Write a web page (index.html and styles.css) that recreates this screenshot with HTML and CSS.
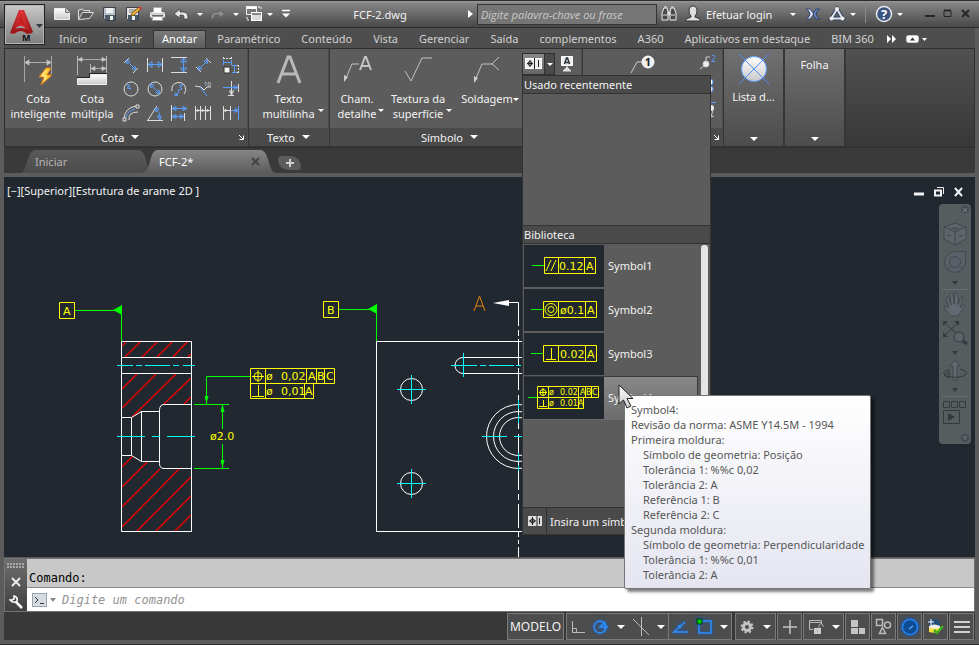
FILE: index.html
```html
<!DOCTYPE html>
<html lang="pt-BR">
<head>
    <meta charset="UTF-8">
    <meta name="viewport" content="width=device-width, initial-scale=1.0">
    <title>FCF-2.dwg</title>
    <link rel="stylesheet" href="styles.css">
</head>
<body>
    <!-- Application menu -->
    <button class="app-button" aria-label="Menu do aplicativo">
        <svg width="38" height="38" viewBox="0 0 38 38">
            <defs>
                <linearGradient id="red" x1="0" x2="1"><stop offset="0" stop-color="#8f1114"/><stop offset=".5" stop-color="#e5373a"/><stop offset="1" stop-color="#8f1114"/></linearGradient>
                <linearGradient id="paper" x2="0" y2="1"><stop offset="0" stop-color="#fff"/><stop offset="1" stop-color="#c8c8cc"/></linearGradient>
            </defs>
            <path d="M4 27 13 4h5l9 22-6 1-3-6q-4-2-7 0l-3 5z" fill="url(#red)"/>
            <path d="m15 7-4 13q4-2 8 0z" fill="#c62023"/>
            <path d="M4 27q9-10 23 0l-6 1q-6-6-13 0z" fill="#a0181b"/>
            <path d="M30 18h7l-3.500 4z" fill="#333b44"/>
            <text class="app-letter" x="16" y="35">M</text>
        </svg>
    </button>

    <header class="titlebar">
        <div class="quick-tools">
            <button class="qt" aria-label="Novo"><svg width="18" height="16" viewBox="0 0 18 16"><path d="M1.500 2.500h11l4 4v7h-15z" fill="url(#paper)" stroke="#eee"/><path d="M12.500 2.500v4h4" fill="#bbb" stroke="#777"/></svg></button>
            <button class="qt" aria-label="Abrir"><svg width="18" height="16" viewBox="0 0 18 16"><path d="M1.500 13V4l4-1 1 1.500h6V7" fill="#666" stroke="#ddd"/><path d="m1.500 13.500 4-7h11l-4 6z" fill="#55585c" stroke="#ddd"/></svg></button>
            <button class="qt" aria-label="Salvar"><svg width="16" height="16" viewBox="0 0 16 16"><path d="M1.500 1.500h12v13h-10l-2-2z" fill="#b9c2ca" stroke="#39424c"/><path d="M4 2h7v5H4z" fill="#f2f2f2"/><path d="M3 9h10v5H3z" fill="#4b5865"/><path d="M8 10h3v4H8z" fill="#eee"/></svg></button>
            <button class="qt" aria-label="Salvar como"><svg width="18" height="16" viewBox="0 0 18 16"><path d="M1.500 1.500h12v13h-10l-2-2z" fill="#e3e3e3" stroke="#39424c"/><path d="M4 4h7M4 6h5" stroke="#777"/><path d="M3 9h10v5H3z" fill="#4b5865"/><path d="M7 10h3v4H7z" fill="#eee"/><path d="m6 10 1-3 7-6 2 2-7 6z" fill="#f1b53c" stroke="#7b5617"/><path d="m14 1 2 2" stroke="#d33" stroke-width="2"/></svg></button>
            <button class="qt" aria-label="Imprimir"><svg width="18" height="16" viewBox="0 0 18 16"><path d="M4.500 1.500h8v5h-8z" fill="#fff" stroke="#aaa"/><rect x="1.500" y="6.500" width="14" height="5" rx="1" fill="#cfcfcf" stroke="#eee"/><path d="M3 9.500h11" stroke="#666"/><path d="M4 10.500h9l1 4H3z" fill="#fff" stroke="#999"/></svg></button>
            <button class="qt" aria-label="Desfazer"><svg width="18" height="16" viewBox="0 0 18 16"><path d="M1 8 7 3v3h3q5 0 5 6v1h-4v-2q0-2-2-2H7v3z" fill="#e8e8e8" stroke="#333" stroke-width=".7"/></svg></button>
            <button class="qt narrow caret" aria-label="Lista desfazer"></button>
            <button class="qt" aria-label="Refazer"><svg width="18" height="16" viewBox="0 0 18 16"><path d="m16 8-6-5v3H7q-5 0-5 6v1h3v-2q0-2 2-2h3v3z" fill="#8b8b8b" stroke="#555" stroke-width=".7"/></svg></button>
            <button class="qt narrow caret" aria-label="Lista refazer"></button>
            <button class="qt" aria-label="Janelas"><svg width="18" height="18" viewBox="0 0 18 18"><rect x="1.500" y="1.500" width="10" height="8" fill="#777" stroke="#eee"/><path d="M2 3h9" stroke="#fff" stroke-width="2"/><rect x="6.500" y="7.500" width="10" height="8" fill="#ddd" stroke="#fff"/><path d="M7 9h9" stroke="#333" stroke-width="1"/><path d="M13 2h3v3M2 12v3h3" fill="none" stroke="#fff" stroke-dasharray="2 1"/></svg></button>
            <button class="qt tiny caret" aria-label="Lista de janelas"></button>
            <button class="qt" aria-label="Personalizar"><svg width="10" height="10" viewBox="0 0 10 10"><path d="M1 1.500h8" stroke="#fff" stroke-width="1.500"/><path d="M1 4.500h8L5 8.500z" fill="#fff"/></svg></button>
        </div>
        <h1 class="file-name">FCF-2.dwg</h1>
        <div class="info-center">
            <svg width="15" height="12" viewBox="0 0 15 12"><path d="M6 2v8l5-4z" fill="#fff"/></svg>
            <input class="search" type="search" aria-label="Pesquisar" placeholder="Digite palavra-chave ou frase">
            <button class="qt" aria-label="Localizar"><svg width="18" height="18" viewBox="0 0 18 18"><path d="m2 8 2-5h3l1 4v8H2zM16 8l-2-5h-3l-1 4v8h6z" fill="#4a4a4a" stroke="#eee"/><path d="M8 7h2v3H8zM3 10h4M11 10h4M4 2h3M11 2h3" stroke="#ddd" fill="#ddd"/></svg></button>
            <button class="qt user" aria-label="Usuário"><svg width="18" height="18" viewBox="0 0 18 18"><path d="M5 6q0-5 4-5t4 5q0 3-2 5v1l5 2v2H2v-2l5-2v-1Q5 9 5 6z" fill="#dedede" stroke="#343434"/></svg></button>
            <a class="login" href="#">Efetuar login</a>
            <button class="qt caret login-caret" aria-label="Opções de login"></button>
            <button class="qt" aria-label="Exchange"><svg width="16" height="16" viewBox="0 0 16 16"><path d="M1 3h4l4 5-4 5H1q4-2 4-5T1 3z" fill="#dfe6f5" stroke="#2e4470"/><path d="m8 8 3-5h4q-4 2-4 5t4 5h-4z" fill="#6d8cc9" stroke="#2e4470"/></svg></button>
            <button class="qt" aria-label="A360"><svg width="18" height="16" viewBox="0 0 18 16"><path d="M9 3 3.500 12.500h11z" fill="none" stroke="#2f4263" stroke-width="4"/><path d="M9 3 3.500 12.500h11z" fill="none" stroke="#dde2ec" stroke-width="2"/><circle cx="9" cy="3" r="2" fill="#eee"/><circle cx="3.500" cy="12.500" r="2" fill="#eee"/><circle cx="14.500" cy="12.500" r="2" fill="#eee"/></svg></button>
            <button class="qt tiny caret" aria-label="Opções A360"></button>
            <span class="bar"></span>
            <button class="qt help" aria-label="Ajuda"><svg width="18" height="18" viewBox="0 0 18 18"><circle cx="9" cy="9" r="7.500" fill="#39547f" stroke="#e8e8ee" stroke-width="1.500"/><text class="help-mark" x="9" y="14">?</text></svg></button>
            <button class="qt tiny caret" aria-label="Opções de ajuda"></button>
            <div class="window-buttons">
                <button aria-label="Minimizar"><svg width="10" height="10"><path d="M0 7h10" stroke="#262626" stroke-width="2"/></svg></button>
                <button aria-label="Restaurar"><svg width="10" height="10"><path d="M1 1.500h7v6H1z" fill="none" stroke="#262626" stroke-width="1"/><path d="M1 1.500h7" stroke="#262626" stroke-width="2"/></svg></button>
                <button aria-label="Fechar"><svg width="10" height="10"><path d="m1 1 7 7M8 1 1 8" stroke="#262626" stroke-width="2"/></svg></button>
            </div>
        </div>
    </header>

    <nav class="tabs">
        <a href="#">Início</a>
        <a href="#">Inserir</a>
        <a href="#" class="active">Anotar</a>
        <a href="#">Paramétrico</a>
        <a href="#">Conteúdo</a>
        <a href="#">Vista</a>
        <a href="#">Gerenciar</a>
        <a href="#">Saída</a>
        <a href="#">complementos</a>
        <a href="#">A360</a>
        <a href="#">Aplicativos em destaque</a>
        <a href="#">BIM 360</a>
        <button class="tab-more" aria-label="Mais guias"><svg width="40" height="10" viewBox="0 0 40 10"><path d="M0 1v8l4-4zM5 1v8l4-4z" fill="#fff"/><rect x="19.500" y="1.500" width="12" height="7" rx="2" fill="#fff" stroke="#ccc"/><path d="m23 6.500 2.500-3 2.500 3z" fill="#333"/><path d="M35 4h5l-2.500 3z" fill="#fff"/></svg></button>
    </nav>

    <section class="ribbon">
        <div class="panel panel-dim">
            <div class="panel-body">
                <button class="big smart">
                    <svg width="32" height="34" viewBox="0 0 32 34"><path d="M2.500 3v26M29.500 3v18" stroke="#a5a5a5"/><path d="M3 9.500h26M7 7v5l-4-2.500zM25 7v5l4-2.500z" stroke="#c4c4c4" fill="#c4c4c4" stroke-width=".8"/><path d="m24 15-7 9h5l-3 8 11-10h-5l4-7z" fill="#ffd23e" stroke="#e47b13"/><path d="m24 17-4 6h4l-2 5" fill="none" stroke="#fff3b0"/></svg>
                    <span>Cota<br>inteligente</span>
                </button>
                <button class="big multiple">
                    <svg width="32" height="34" viewBox="0 0 32 34"><path d="M1.500 3v19M30.500 3v19M14.500 11v11" stroke="#b5b5b5"/><path d="M2 6.500h28M15 15.500h15M6 4.500v4l-4-2zM26 4.500v4l4-2zM19 13.500v4l-4-2zM26 13.500v4l4-2z" stroke="#c8c8c8" fill="#c8c8c8" stroke-width=".7"/><path d="M1.500 25.500h13v-4h16v10h-29z" fill="url(#paper)" stroke="#eee"/><path d="M1 24.500h12.500v-4H31" fill="none" stroke="#222"/></svg>
                    <span>Cota<br>múltipla</span>
                </button>
                <div class="dim-grid">
                    <button aria-label="Alinhada"><svg viewBox="0 0 18 18"><path d="m2 7 5-5M11 17l5-5" class="w"/><path d="m5 5 8 8M4 4l4 1-3 3zM14 14l-4-1 3-3z" class="b"/></svg></button>
                    <button aria-label="Linear"><svg viewBox="0 0 18 18"><path d="M1.500 2v14M16.500 2v14" class="w"/><path d="M2 8.500h14M2 8.500l4-3v6zM16 8.500l-4-3v6z" class="b"/></svg></button>
                    <button aria-label="Vertical"><svg viewBox="0 0 18 18"><path d="M1 1.500h16M1 16.500h16" class="w"/><path d="M13.500 2v14M13.500 2l-3 4h6zM13.500 16l-3-4h6z" class="b"/></svg></button>
                    <button aria-label="Rotacionada"><svg viewBox="0 0 18 18"><path d="m12 2 5 5M2 11l5 5" class="w"/><path d="m5 13 8-8M14 4l-4 1 3 3zM4 14l4-1-3-3z" class="b"/></svg></button>
                    <button aria-label="Automática"><svg viewBox="0 0 18 18"><path d="M1.500 1v5M9.500 1v5M1 2.500h9M12 9.500h5M12 16.500h5M16.500 9v8" class="w" stroke-dasharray="2 1"/><path d="M1 6.500h9M1.500 4v5M9.500 4v5M10 9.500h5M10 16.500h5M12.500 9v8" class="b"/><path d="M2 11h6v6H2z" fill="#f1f1f1" stroke="#333"/></svg></button>
                    <button aria-label="Raio"><svg viewBox="0 0 18 18"><circle cx="9" cy="9" r="7" class="w"/><path d="m9 9-4-4 3 0-3 3z" class="b"/></svg></button>
                    <button aria-label="Diâmetro"><svg viewBox="0 0 18 18"><circle cx="9" cy="9" r="7" class="w"/><path d="m5 5 8 8M4 4l4 1-3 3zM14 14l-4-1 3-3z" class="b"/></svg></button>
                    <button aria-label="Desvio"><svg viewBox="0 0 18 18"><path d="M2 11q-1-6 4-8 6-2 9 3 2 5-1 8" class="w"/><path d="m5 16 4-4-1-2 4-1-2-2 3-2-4 0M5 16l0-3 3 2z" class="b"/></svg></button>
                    <button aria-label="Chanfro"><svg viewBox="0 0 18 18"><path d="m1 6 6 1 3 3 3-3h4" class="w"/><path d="m6 7 7 9" class="b"/><text x="10" y="6" class="mini">10</text></svg></button>
                    <button aria-label="Ordenada"><svg viewBox="0 0 18 18"><path d="M9.500 1v14M16.500 4v8M6 15.500h6M9.500 15l-2-4h4z" class="w"/><path d="M1 7.500h14M16 7.500l-4-2v4z" class="b"/></svg></button>
                    <button aria-label="Arco"><svg viewBox="0 0 18 18"><path d="M2 14Q3 4 14 2M7 16Q6 8 16 8" class="w"/><path d="M4 14Q5 7 13 5" class="b"/><path d="M1 14h3v3H1zM14 1h3v3h-3z" class="w"/></svg></button>
                    <button aria-label="Angular"><svg viewBox="0 0 18 18"><path d="M1 16.500h16M2 16 11 2" class="w"/><path d="M10 5q5 4 4 10M9 4l4 1-3 3zM14 16l-3-4h4z" class="b"/></svg></button>
                    <button aria-label="Linha de base"><svg viewBox="0 0 18 18"><path d="M1.500 1v16M14.500 9v8" class="w"/><path d="M2 4.500h15M2 12.500h12M2 4.500l4-2v4zM17 4.500l-4-2v4zM2 12.500l4-2v4zM14 12.500l-4-2v4z" class="b"/></svg></button>
                    <button aria-label="Contínua"><svg viewBox="0 0 18 18"><path d="M1.500 2v14M6.500 2v14M11.500 2v14M16.500 2v14M2 6.500h15M2 6.500l2-1v2zM7 6.500l2-1v2zM12 6.500l2-1v2z" class="w"/></svg></button>
                    <button aria-label="Cadeia"><svg viewBox="0 0 18 18"><path d="M1.500 2v14M8.500 2v14M2 6.500h6M2 6.500l2-1v2z" class="w"/><path d="M9 6.500h6M16.500 2v14M16 6.500l-3-2v4z" class="b"/></svg></button>
                </div>
            </div>
            <div class="panel-title"><button class="title-label">Cota</button><button class="launcher" aria-label="Configurações de cota"><svg width="6" height="6" viewBox="0 0 6 6"><path d="M1 1l4 4M5.500 1.500v4h-4" fill="none" stroke="#fff"/></svg></button></div>
        </div>

        <div class="panel panel-text">
            <div class="panel-body">
                <button class="big multiline">
                    <svg width="32" height="34" viewBox="0 0 32 34"><path d="M5 30 15 4h2l10 26M9 21h14" fill="none" stroke="#b9b9b9" stroke-width="3"/></svg>
                    <span>Texto<br>multilinha</span>
                    <i class="side-caret"></i>
                </button>
            </div>
            <div class="panel-title"><button class="title-label">Texto</button></div>
        </div>

        <div class="panel panel-symbol">
            <div class="panel-body">
                <button class="big callout">
                    <svg width="34" height="34" viewBox="0 0 34 34"><path d="m6 25 6-14h7" fill="none" stroke="#c4c4c4"/><path d="m4 29 0-7 4 2z" fill="#ccc"/><path d="m20 17 5-13h1l5 13M22 13h7" fill="none" stroke="#c4c4c4" stroke-width="2"/></svg>
                    <span>Cham.<br>detalhe</span>
                    <i class="side-caret"></i>
                </button>
                <button class="big texture">
                    <svg width="34" height="34" viewBox="0 0 34 34"><path d="m4 18 6 10L21 5h10" fill="none" stroke="#c4c4c4"/></svg>
                    <span>Textura da<br>superfície</span>
                    <i class="side-caret"></i>
                </button>
                <button class="big welding">
                    <svg width="34" height="34" viewBox="0 0 34 34"><path d="m6 25 6-14h10l7-7M22 11l7 6" fill="none" stroke="#c4c4c4"/><path d="m4 30 0-7 4 2z" fill="#ccc"/></svg>
                    <span>Soldagem</span>
                    <i class="side-caret"></i>
                </button>
                <div class="gallery-anchor">
                    <div class="split">
                        <button aria-label="Quadro de controle"><svg width="18" height="14" viewBox="0 0 18 14"><rect x=".5" y="1.500" width="16" height="10" fill="#eee" stroke="#fff"/><path d="M9.500 1v11M13.500 3v7M2 6.500h6M5 3v7" stroke="#222"/><circle cx="5" cy="6.500" r="2" fill="none" stroke="#222"/></svg></button>
                        <button class="split-arrow caret" aria-label="Abrir galeria"></button>
                    </div>
                    <!-- Symbol gallery -->
                    <div class="gallery">
                        <h2>Usado recentemente</h2>
                        <div class="recent"></div>
                        <h2>Biblioteca</h2>
                        <div class="library">
                            <ul>
                                <li><svg class="thumb" viewBox="0 0 80 42"><path class="g" d="M8 20.500h12"/><path class="y" d="M20.500 12.500h51v16h-51zM34.500 12v16M60.500 12v16M22 26l5-11M27 26l5-11"/><text class="cad" x="35" y="25">0.12</text><text class="cad" x="62" y="25">A</text></svg><button>Symbol1</button></li>
                                <li><svg class="thumb" viewBox="0 0 80 42"><path class="g" d="M7 20.500h12"/><path class="y" d="M19.500 12.500h53v16h-53zM34.500 12v16M61.500 12v16"/><circle class="y" cx="27" cy="20.500" r="6"/><circle class="y" cx="27" cy="20.500" r="3"/><text class="cad" x="36" y="25">ø0.1</text><text class="cad" x="63" y="25">A</text></svg><button>Symbol2</button></li>
                                <li><svg class="thumb" viewBox="0 0 80 42"><path class="g" d="M7 20.500h12"/><path class="y" d="M19.500 12.500h53v16h-53zM34.500 12v16M61.500 12v16M22 26.500h10M27.500 15v11"/><text class="cad" x="36" y="25">0.02</text><text class="cad" x="63" y="25">A</text></svg><button>Symbol3</button></li>
                                <li class="hover"><svg class="thumb" viewBox="0 0 80 42"><path class="g" d="M4 20.500h9"/><path class="y" d="M13.500 9.500h61v11h-61zM13.500 20.500v11h46v-11M24.500 9v22M54.500 9v22M61.500 9v11M67.500 9v11M15 15.500h8M19 11v8M15 29.500h8M19.500 23v6"/><circle class="y" cx="19" cy="15.500" r="3"/><text class="cad small" x="25" y="18">ø</text><text class="cad small" x="36" y="18">0.02</text><text class="cad small" x="56" y="18">A</text><text class="cad small" x="62" y="18">B</text><text class="cad small" x="68" y="18">C</text><text class="cad small" x="25" y="29">ø</text><text class="cad small" x="36" y="29">0.01</text><text class="cad small" x="54" y="29">A</text></svg><button>Symbol4</button></li>
                            </ul>
                            <span class="scroll-thumb"></span>
                        </div>
                        <button class="insert">
                            <span class="insert-icon"><svg width="14" height="10" viewBox="0 0 14 10"><rect width="14" height="10" fill="#ddd"/><path d="M9 0v10M11.500 2v6M1 5h7M4.500 1v8" stroke="#222"/><circle cx="4.500" cy="5" r="2" fill="none" stroke="#222"/></svg></span>
                            <span>Insira um símbolo...</span>
                        </button>
                        <div class="tooltip" role="tooltip">
                            <p>Symbol4:</p>
                            <p>Revisão da norma: ASME Y14.5M - 1994</p>
                            <p>Primeira moldura:</p>
                            <p class="sub">Símbolo de geometria: Posição</p>
                            <p class="sub">Tolerância 1: %%c 0,02</p>
                            <p class="sub">Tolerância 2: A</p>
                            <p class="sub">Referência 1: B</p>
                            <p class="sub">Referência 2: C</p>
                            <p>Segunda moldura:</p>
                            <p class="sub">Símbolo de geometria: Perpendicularidade</p>
                            <p class="sub">Tolerância 1: %%c 0,01</p>
                            <p class="sub">Tolerância 2: A</p>
                        </div>
                        <svg class="cursor" width="16" height="26" viewBox="0 0 16 26"><path d="M1 1v19l4.500-4 3.500 8 4-2-4-7.500h6z" fill="url(#paper)" stroke="#222"/></svg>
                    </div>
                </div>
                <button class="datum" aria-label="Identificador de referência"><svg width="16" height="18" viewBox="0 0 16 18"><path d="M2.500 2.500h11v9h-11z" fill="#eee" stroke="#fff"/><path d="m5.500 10 2-6h1l2 6M6 8.500h4" fill="none" stroke="#28303a" stroke-width="1.500"/><path d="M8 12v2M4 17h8l-4-4z" fill="#ddd" stroke="#ddd"/></svg></button>
            </div>
            <div class="panel-title"><button class="title-label">Símbolo</button><button class="launcher" aria-label="Configurações de símbolo"></button></div>
        </div>

        <div class="panel panel-balloon">
            <div class="panel-body">
                <button class="balloon" aria-label="Balão"><svg width="32" height="30" viewBox="0 0 32 30"><path d="m6 20 6-11h5" fill="none" stroke="#ccc"/><circle cx="23" cy="9" r="6" fill="#f0f0f0" stroke="#fff"/><text class="digit" x="23" y="13">1</text></svg></button>
                <div class="balloon-tools">
                    <button aria-label="Renumerar"><svg width="18" height="18" viewBox="0 0 18 18"><circle cx="7" cy="11" r="3" fill="#eee" stroke="#ccc"/><path d="m1 16 4-3M7 8V4h4" fill="none" stroke="#ccc"/><text class="blue-digit" x="12" y="9">2</text></svg></button>
                    <button aria-label="Organizar"><svg width="18" height="18" viewBox="0 0 18 18"><circle cx="11" cy="5" r="3" fill="#fff" stroke="#5b9dfa"/><circle cx="11" cy="12" r="3" fill="#ddd" stroke="#5b9dfa"/></svg></button>
                    <button aria-label="Lista"><svg width="18" height="18" viewBox="0 0 18 18"><path d="M8 1.500h9" stroke="#5b9dfa"/><circle cx="12" cy="7" r="3" fill="#eee"/><path d="m14 9-2 7M12 16l3-1" stroke="#ccc"/></svg></button>
                </div>
            </div>
            <div class="panel-title"><span class="title-fill"></span><button class="launcher" aria-label="Configurações de balão"><svg width="6" height="6" viewBox="0 0 6 6"><path d="M1 1l4 4M5.500 1.500v4h-4" fill="none" stroke="#fff"/></svg></button></div>
        </div>

        <button class="collapsed">
            <svg width="32" height="32" viewBox="0 0 32 32"><circle cx="16" cy="16" r="12.500" fill="url(#paper)" stroke="#5b9dfa"/><path d="m1 1 30 30M31 1 1 31" stroke="#4c90f5"/></svg>
            <span>Lista d...</span>
            <i></i>
        </button>
        <button class="collapsed">
            <span>Folha</span>
            <i></i>
        </button>
        <div class="ribbon-rest"></div>
    </section>

    <nav class="doc-tabs">
        <a href="#" class="doc">Iniciar</a>
        <a href="#" class="doc current">FCF-2* <svg width="9" height="9" viewBox="0 0 9 9"><path d="m1 1 7 7M8 1 1 8" stroke="#444" stroke-width="2"/></svg></a>
        <button class="new-doc" aria-label="Nova guia"><svg width="10" height="10" viewBox="0 0 10 10"><path d="M5 1v8M1 5h8" stroke="#d0d0d0" stroke-width="2"/></svg></button>
    </nav>

    <main class="canvas">
        <div class="canvas-top">
            <p>[−][Superior][Estrutura de arame 2D ]</p>
            <div class="view-buttons">
                <button aria-label="Minimizar vista"><svg width="12" height="12" viewBox="0 0 12 12"><path d="M1 8h10" stroke="#f2f2f2" stroke-width="3"/></svg></button>
                <button aria-label="Restaurar vista"><svg width="12" height="12" viewBox="0 0 12 12"><path d="M2 4.500h6v5H2z" fill="none" stroke="#f2f2f2" stroke-width="2"/><path d="M4 1.500h6.500V8" fill="none" stroke="#f2f2f2"/></svg></button>
                <button aria-label="Fechar vista"><svg width="12" height="12" viewBox="0 0 12 12"><path d="m2 2 7 8M9 2l-7 8" stroke="#f2f2f2" stroke-width="2"/></svg></button>
            </div>
        </div>

        <svg class="drawing" width="518" height="380" viewBox="4 177 518 380">
            <!-- Section view hatch -->
            <path class="r" d="M122 346l4-4M125 357l16-16M142 357l16-16M157 357l16-16M173 357l15-16M188 357l3-3M122 389l15-15M122 408l34-34M132 417l44-43M164 404l27-26M184 404l7-7M122 467l11-11M122 487l25-25M122 507l38-38M122 527l57-58M137 531l54-54M156 531l35-35M175 531l16-16"/>
            <path class="w" d="M121.500 341.500h70v190h-70zM121 357.500h70M121 373.500h70M121 417.500h10M121 455.500h10M131.500 417.500v38M131.500 417.500l10-6h18M131.500 455.500l10 6h18M141.500 411v50M191 404.500h-27q-4 0-4.500 5v54q0 5 4.500 5h27"/>
            <path class="c" d="M117 365.500h16M136 365.500h6M145 365.500h25M173 365.500h6M183 365.500h12M117 436.500h28M152 436.500h8M167 436.500h28"/>
            <!-- Datums -->
            <path class="y" d="M59.500 302.500h15v16h-15zM323.500 301.500h15v16h-15z"/>
            <text class="cad" x="63" y="315">A</text>
            <text class="cad" x="327" y="314">B</text>
            <path class="g" d="M75 310.500h40M121.500 305v36M339 309.500h31M376.500 304v37"/>
            <path class="gf" d="M122 305v10l-9-5zM377 304v10l-9-5z"/>
            <!-- Tolerance frame -->
            <path class="y" d="M250.500 368.500h84v15h-84zM250.500 383.500v15h63v-15M265.500 368v30M306.500 368v15M316.500 368v15M324.500 368v15M304.500 383v15M252 376.500h12M258 370v12M252 396.500h12M258.500 385v12"/>
            <circle class="y" cx="258" cy="376.500" r="4"/>
            <text class="cad" x="266" y="380">ø</text><text class="cad" x="281" y="380">0,02</text>
            <text class="cad" x="308" y="380">A</text><text class="cad" x="317" y="380">B</text><text class="cad" x="326" y="380">C</text>
            <text class="cad" x="266" y="395">ø</text><text class="cad" x="281" y="395">0,01</text><text class="cad" x="305" y="395">A</text>
            <path class="g" d="M250 376.500h-43.500v28M194 404.500h35M194 468.500h35M222.500 405v24M222.500 444v24"/>
            <path class="gf" d="M206.500 404l-2-8h4zM222.500 404l-2 8h4zM222.500 468l-2-8h4z"/>
            <text class="cad" x="210" y="440">ø2.0</text>
            <!-- Front view -->
            <path class="w" d="M522 341.500H376.500v190H522M522 357.500h-59a8 8 0 0 0 0 16h59"/>
            <circle class="w" cx="411.500" cy="389.500" r="11"/><circle class="w" cx="411.500" cy="483.500" r="11"/>
            <circle class="w" cx="518.500" cy="436.500" r="32"/><circle class="w" cx="518.500" cy="436.500" r="25"/><circle class="w" cx="518.500" cy="436.500" r="19"/>
            <path class="w" d="M509 302.500h9.500V326M518.500 330v6M518.500 339v26M518.500 368v22M518.500 395v6M518.500 405v24M518.500 434v22M518.500 461v5M518.500 470v20M518.500 494v6M518.500 504v24M518.500 531v6M518.500 540v4M518.500 547v10"/>
            <path d="M493 303l16-3v6z" fill="#fff"/>
            <path class="c" d="M397 389.500h29M411.500 375v29M397 483.500h29M411.500 469v29M451 365.500h26M480 365.500h6M489 365.500h25M516 365.500h5M463.500 353v24M482 436.500h25M514 436.500h8M518.500 400v9M518.500 415v8M518.500 453v8M518.500 465v6"/>
            <path d="M474 311l5.500-15 5.500 15M476 306h7" fill="none" stroke="#e8820e"/>
        </svg>

        <div class="navbar">
            <svg width="32" height="240" viewBox="0 0 32 240">
                <g fill="none" stroke="#42494f">
                    <circle cx="26" cy="5.500" r="3.500" fill="#4a5156"/><path d="m24 4 4 4M28 4l-4 4" stroke="#777d82"/>
                    <path d="m16 19 11 4v12l-11 6-11-6V23zM5 23l11 5 11-5M16 28v13" fill="#5e656b"/><path d="M14 24l4 1M8 31l4 1M20 33l4-2" stroke="#3d4349"/>
                    <path d="M16 47.500h10.500V58a10.500 10.500 0 1 1-10.500-10.500z" fill="#596067"/><circle cx="16" cy="58" r="5.500"/><path d="m8 66 4-4M24 66l-4-4"/>
                    <path d="M13 77h6l-3 4z" fill="#34393e" stroke="none"/><path d="M3 85.500h26" stroke="#686e72"/>
                    <path d="M12 112q-4-4-7-9 0-3 5 1l-3-10q1-3 3 0l2 7-1-11q1-3 3 0l1 10 1-10q2-2 3 0v11l3-8q2-1 2 1l-3 10 3-3q4 0 0 3l-5 8z" fill="#626970"/>
                    <path d="m5 118 15 14M20 118 5 132" stroke="#34393e"/><path d="M4 117h5l-5 5zM20 117h-5l5 5zM4 133h5l-5-5z" fill="#34393e" stroke="none"/><circle cx="20" cy="133" r="5" fill="#5c6369" stroke="#34393e"/><path d="m24 137 4 3" stroke="#34393e" stroke-width="3"/>
                    <path d="M13 147h6l-3 4z" fill="#34393e" stroke="none"/>
                    <path d="M14 176v-14h-3l5-6 5 6h-3v14z" fill="#61686e"/><path d="M11 166q-8 1-6 4 3 4 16 3 9-2 5-6l-5-2M5 171l5-3v6z" stroke="#34393e"/>
                    <path d="M13 184h6l-3 4z" fill="#34393e" stroke="none"/><path d="M3 192.500h26" stroke="#686e72"/>
                    <path d="M4.500 197.500h6v6h-6zM12.500 197.500h6v6h-6zM20.500 197.500h6v6h-6zM4.500 206.500h16v13h-16z" stroke="#34393e"/><path d="m9 209 7 4-7 4z" fill="#34393e" stroke="none"/>
                    <circle cx="26" cy="234" r="3.500" fill="#4a5156"/><path d="M24 233h4M25 235h2" stroke="#777d82"/>
                </g>
            </svg>
        </div>
    </main>

    <section class="command">
        <div class="command-side">
            <span class="grip"></span>
            <button aria-label="Fechar linha de comando"><svg width="10" height="10" viewBox="0 0 10 10"><path d="m1 1 8 8M9 1 1 9" stroke="#eee" stroke-width="2"/></svg></button>
            <button aria-label="Personalizar comando"><svg width="14" height="14" viewBox="0 0 14 14"><path d="m7 7 6 6" stroke="#fff" stroke-width="2.500"/><path d="M5 1q4 1 3 5-3 3-7-1l2 0 2-1z" fill="none" stroke="#fff" stroke-width="1.500"/></svg></button>
        </div>
        <div class="command-main">
            <p class="history">Comando:</p>
            <div class="prompt">
                <button aria-label="Comandos recentes"><svg width="24" height="14" viewBox="0 0 24 14"><rect x=".5" y=".5" width="14" height="13" fill="#d6dce2" stroke="#9aa5b0"/><path d="m3 4 3 3-3 3M8 10.500h4" fill="none" stroke="#333"/><path d="M18 5h6l-3 4z" fill="#888"/></svg></button>
                <input type="text" aria-label="Comando" placeholder="Digite um comando">
            </div>
        </div>
    </section>

    <footer class="status">
        <button class="model">MODELO</button>
        <div class="cell modes">
            <button aria-label="Orto"><svg width="14" height="14" viewBox="0 0 14 14"><path d="M1.500 1v11.500H14M1 8.500h4.500V13" fill="none" stroke="#bbb"/></svg></button>
            <button class="glow" aria-label="Polar"><svg width="18" height="16" viewBox="0 0 18 16"><circle cx="8" cy="8" r="6" fill="none" stroke="#2e8dfc" stroke-width="1.500"/><path d="M16 8H8l5-5M13 5v6" fill="none" stroke="#2e8dfc" stroke-width="1.500"/></svg></button>
            <button class="caret drop" aria-label="Opções polar"></button>
            <button aria-label="Isométrico"><svg width="18" height="20" viewBox="0 0 18 20"><path d="m1 2 16 16M9.500 0v19" stroke="#bbb"/></svg></button>
            <button class="caret drop" aria-label="Opções isométrico"></button>
        </div>
        <div class="cell snaps">
            <button class="glow" aria-label="Rastreamento"><svg width="18" height="16" viewBox="0 0 18 16"><path d="M16 13H2L13 3" fill="none" stroke="#2e8dfc" stroke-width="1.500"/><path d="M6 6h3v3H6z" fill="#2e8dfc"/></svg></button>
            <button class="glow" aria-label="Snap"><svg width="17" height="17" viewBox="0 0 17 17"><path d="M3 3h12v12H3z" fill="none" stroke="#2e8dfc" stroke-width="1.500"/><path d="M1 1h5v5H1z" fill="#0c0" stroke="#030"/></svg></button>
            <button class="caret drop" aria-label="Opções snap"></button>
        </div>
        <div class="cell gear">
            <button aria-label="Espaço de trabalho"><svg width="14" height="14" viewBox="0 0 14 14"><circle cx="7" cy="7" r="3.500" fill="none" stroke="#c4c4c4" stroke-width="3"/><circle cx="7" cy="7" r="5.500" fill="none" stroke="#c4c4c4" stroke-width="2" stroke-dasharray="2.300 2"/></svg></button>
            <button class="caret drop" aria-label="Opções de espaço"></button>
        </div>
        <button class="cell" aria-label="Monitor"><svg width="14" height="14"><path d="M7 0v14M0 7h14" stroke="#c4c4c4" stroke-width="1.500"/></svg></button>
        <div class="cell lock">
            <button aria-label="Bloquear"><svg width="17" height="17" viewBox="0 0 17 17"><path d="M5 11.500H1.500v-9h12V6M1 4.500h12" fill="none" stroke="#bbb"/><path d="M6 10h7v6H6z" fill="#ccc"/><path d="M11 10V7q2-3 4 0v2M9.500 12v2" fill="none" stroke="#aaa"/></svg></button>
            <button class="caret drop" aria-label="Opções bloquear"></button>
        </div>
        <button class="cell" aria-label="Isolar"><svg width="16" height="16" viewBox="0 0 16 16"><path d="M1 1h7v7H1zM1 9h7v6H1zM9 9h6v6H9z" fill="#c4c4c4"/></svg></button>
        <button class="cell" aria-label="Formas"><svg width="17" height="17" viewBox="0 0 17 17"><path d="M1.500 1.500h6v6h-6zM7.500 9.500l3 6h-6z" fill="none" stroke="#bbb" stroke-width="1.500"/><circle cx="12.500" cy="7" r="3" fill="none" stroke="#bbb" stroke-width="1.500"/></svg></button>
        <button class="cell glow" aria-label="Hardware"><svg width="18" height="18" viewBox="0 0 18 18"><circle cx="9" cy="9" r="7.500" fill="#0d4b92" stroke="#2384f4" stroke-width="1.500"/><path d="m8 11 4-3" stroke="#59aaff" stroke-width="1.500"/></svg></button>
        <button class="cell" aria-label="Padrões"><svg width="17" height="17" viewBox="0 0 17 17"><path d="M2 1h8l3 3v5H2z" fill="#224e78"/><path d="M2 8h11v5q-5 3-11 1z" fill="#f4df35"/><path d="M2 8q5-3 11 0v2q-5 1-11 0z" fill="#eee"/><path d="M1 4h6M4 1v6" stroke="#fff"/><path d="m7 12 3 3 6-7" fill="none" stroke="#43ad22" stroke-width="2.500"/></svg></button>
        <button class="cell" aria-label="Personalização"><svg width="16" height="14"><path d="M0 2h16M0 7h16M0 12h16" stroke="#d0d0d0" stroke-width="2"/></svg></button>
    </footer>
</body>
</html>
```

FILE: styles.css
```css
* {
    box-sizing: border-box;
}
body {
    margin: 0;
    min-height: 100vh;
    padding: 0 4px 4px;
    display: flex;
    flex-direction: column;
    position: relative;
    background-color: #5c5c5c;
    border: solid #2e2e2e;
    border-width: 1px 0;
    color: #f2f2f2;
    font-family: "Noto Sans", "Open Sans", sans-serif;
    font-size: 11px;
    line-height: 15px;
}
h1, h2, p, ul {
    margin: 0;
    padding: 0;
    font-size: 11px;
    font-weight: 400;
    list-style: none;
}
button {
    padding: 0;
    border: 0;
    background: none;
    color: inherit;
    font: inherit;
    display: flex;
    align-items: center;
    justify-content: center;
}
svg {
    display: block;
    flex: none;
}
a {
    color: inherit;
    text-decoration: none;
}
.caret::after {
    content: "";
    border: 3px solid transparent;
    border-top-color: #fff;
    border-bottom: 0;
}

/* Title bar */
.app-button {
    position: absolute;
    left: 4px;
    top: 3px;
    z-index: 2;
    width: 41px;
    height: 41px;
    border: 1px solid #222;
    background: linear-gradient(#c9c9c9, #7d7d7d);
    box-shadow: inset 0 0 0 1px #b5b5b5;
}
.app-letter {
    font-size: 9px;
    font-weight: 700;
    fill: #111;
}
.titlebar {
    height: 27px;
    margin: 0 -4px;
    padding-left: 50px;
    display: flex;
    align-items: center;
    background: linear-gradient(#9a9a9a, #858585 8%, #6a6a6a 50%, #484848);
    border-bottom: 1px solid #2f2f2f;
}
.quick-tools, .info-center {
    display: flex;
    align-items: center;
}
.qt {
    width: 24px;
    height: 24px;
}
.qt.narrow {
    width: 12px;
}
.qt.tiny {
    width: 8px;
}
.file-name {
    flex: 1;
    text-align: center;
}
.search {
    width: 180px;
    height: 21px;
    padding: 0 3px;
    border: 1px solid #333;
    background-color: #757575;
    color: #fff;
    font: italic 11px "Open Sans", sans-serif;
}
.search::placeholder {
    color: #c9c9c9;
}
.login {
    width: 80px;
    padding-left: 1px;
}
.login-caret {
    width: 16px;
}
.bar {
    width: 1px;
    height: 18px;
    margin: 0 6px 0 8px;
    background-color: #888;
}
.window-buttons {
    display: flex;
    gap: 8px;
    margin: 0 8px 0 21px;
}

/* Ribbon tabs */
.tabs {
    height: 20px;
    padding-left: 45px;
    display: flex;
    align-items: flex-end;
    gap: 1px;
    background-color: #4e4e4e;
    color: #d2d2d2;
}
.tabs a {
    height: 18px;
    padding: 1px 10px 0;
    white-space: nowrap;
}
.tabs .active {
    padding: 0 8px;
    border: 1px solid #333;
    border-bottom: 0;
    background: linear-gradient(#7b7b7b, #5d5d5d);
    color: #fff;
}
.tab-more {
    height: 18px;
    margin-left: 2px;
}

/* Ribbon */
.ribbon {
    height: 100px;
    display: flex;
    gap: 1px;
    background-color: #363636;
    border: solid #2f2f2f;
    border-width: 1px;
    padding-bottom: 1px;
}
.panel {
    display: flex;
    flex-direction: column;
    background-color: #5c5c5c;
    border-right: 1px solid #4c4c4c;
}
.panel-dim {
    width: 243px;
}
.panel-dim .panel-body {
    padding-left: 1px;
}
.panel-text {
    width: 80px;
}
.panel-symbol {
    width: 252px;
}
.panel-balloon {
    width: 140px;
}
.panel-body {
    flex: 1;
    display: flex;
    align-items: flex-start;
    padding-top: 4px;
}
.panel-title {
    height: 18px;
    display: flex;
    background-color: #4a4a4a;
}
.title-label, .title-fill {
    flex: 1;
}
.title-label::after {
    content: "";
    margin-left: 7px;
    border: 4px solid transparent;
    border-top-color: #fff;
    border-bottom: 0;
}
.launcher {
    width: 12px;
}
.big {
    position: relative;
    flex-direction: column;
    justify-content: flex-start;
    white-space: nowrap;
}
.big span {
    margin-top: 4px;
}
.smart {
    width: 68px;
}
.multiple {
    width: 46px;
}
.multiline {
    width: 80px;
}
.callout {
    width: 54px;
}
.texture {
    width: 68px;
}
.welding {
    width: 70px;
}
.side-caret {
    position: absolute;
    right: 0;
    bottom: 9px;
    border: 3px solid transparent;
    border-top-color: #fff;
    border-bottom: 0;
}
.multiline .side-caret {
    right: 4px;
}
.welding .side-caret {
    right: 3px;
    bottom: 5px;
}
.dim-grid {
    flex: 1;
    display: grid;
    grid-template-columns: repeat(4, 24px) 32px;
    grid-auto-rows: 24px;
    margin-left: 5px;
}
.dim-grid svg {
    width: 18px;
    height: 18px;
}
.dim-grid .w {
    fill: none;
    stroke: #dedede;
}
.dim-grid .b {
    fill: none;
    stroke: #5b9dfa;
}
.mini {
    font-size: 6px;
    fill: #ddd;
}
.gallery-anchor {
    position: relative;
    z-index: 5;
}
.split {
    width: 33px;
    height: 22px;
    display: flex;
    border: 1px solid #2f2f2f;
    background: linear-gradient(#888, #666);
}
.split button {
    flex: 1;
}
.split .split-arrow {
    flex: none;
    width: 10px;
    border-left: 1px solid #333;
    background-color: #4b4b4b;
}
.datum {
    width: 24px;
    height: 20px;
}
.balloon {
    margin-left: 42px;
}
.balloon-tools {
    display: flex;
    flex-direction: column;
    gap: 6px;
    margin-left: 42px;
}
.digit {
    font-size: 11px;
    font-weight: 700;
    text-anchor: middle;
    fill: #222;
}
.help-mark {
    font-size: 13px;
    font-weight: 700;
    text-anchor: middle;
    fill: #fff;
}
.blue-digit {
    font-size: 9px;
    fill: #5b9dfa;
}
.collapsed {
    width: 59px;
    margin-right: 1px;
    padding: 4px 0 5px;
    flex-direction: column;
    justify-content: flex-start;
    background: linear-gradient(#707070, #4c4c4c);
}
.collapsed span {
    margin-top: 4px;
}
.collapsed i {
    margin-top: auto;
    border: 4px solid transparent;
    border-top-color: #fff;
    border-bottom: 0;
}
.ribbon-rest {
    flex: 1;
    background: linear-gradient(#515151, #383838);
}

/* Symbol gallery */
.gallery {
    position: absolute;
    left: 0;
    top: 100%;
    width: 189px;
    background-color: #5c5c5c;
    border: 1px solid #333;
}
.gallery h2 {
    height: 18px;
    padding: 1px;
    background-color: #4a4a4a;
    border-bottom: 1px solid #333;
}
.gallery .recent {
    height: 132px;
    border-bottom: 1px solid #333;
}
.library {
    height: 263px;
    display: flex;
    padding-left: 1px;
}
.library ul {
    width: 174px;
}
.library li {
    height: 44px;
    display: flex;
    align-items: stretch;
    border-top: 1px solid #5c5c5c;
    border-right: 1px solid transparent;
}
.library li.hover {
    border-color: #3a3a3a;
    background: linear-gradient(#888, #6b6b6b);
}
.library li button {
    flex: 1;
    justify-content: flex-start;
    padding: 0 0 2px 4px;
}
.thumb {
    width: 80px;
    height: 42px;
    background-color: #212830;
}
.scroll-thumb {
    width: 7px;
    height: 200px;
    margin: 1px 0 0 3px;
    border-radius: 3px;
    background-color: #e4e4e4;
}
.insert {
    width: 100%;
    height: 27px;
    justify-content: flex-start;
    background-color: #4a4a4a;
    border-top: 1px solid #333;
}
.insert-icon {
    width: 24px;
    height: 26px;
    margin-right: 3px;
    padding: 8px 5px;
    border-right: 1px solid #333;
}
.tooltip {
    position: absolute;
    left: 101px;
    top: 319px;
    width: max-content;
    padding: 6px;
    border: 1px solid #767676;
    border-radius: 2px;
    background: linear-gradient(#fff, #e4e5f0);
    box-shadow: 3px 3px 3px rgba(0, 0, 0, 0.5);
    color: #575757;
}
.tooltip .sub {
    padding-left: 12px;
}
.cursor {
    position: absolute;
    left: 95px;
    top: 308px;
}

/* CAD line work */
.y, .g, .r, .w, .c {
    fill: none;
    stroke-width: 1;
}
.y {
    stroke: #ff0;
}
.g {
    stroke: #0f0;
}
.gf {
    fill: #0f0;
}
.r {
    stroke: #f00000;
    stroke-width: 1.4;
}
.w {
    stroke: #fff;
}
.c {
    stroke: #0ff;
}
.cad {
    font-family: "DejaVu Sans", sans-serif;
    font-size: 11px;
    fill: #ff0;
}
.cad.small {
    font-size: 8px;
}

/* Document tabs */
.doc-tabs {
    height: 29px;
    padding: 2px 0 0 16px;
    display: flex;
    background-color: #3a3a3a;
    border-bottom: 4px solid #5c5c5c;
}
.doc {
    width: 132px;
    height: 23px;
    padding: 4px 0 0 15px;
    background: linear-gradient(#5a5a5a, #4b4b4b);
    clip-path: path("M0 23 C8 23 6 0 16 0 H118 C128 0 126 23 132 23 Z");
    color: #b4b4b4;
}
.current {
    width: 134px;
    margin-left: -10px;
    padding: 4px 16px 0 17px;
    display: flex;
    justify-content: space-between;
    background: linear-gradient(#868686, #5c5c5c);
    clip-path: path("M0 23 C10 23 6 0 16 0 H118 C128 0 126 23 134 23 Z");
    color: #fff;
}
.current svg {
    margin-top: 3px;
}
.new-doc {
    width: 23px;
    height: 14px;
    margin: 6px 0 0 2px;
    border-radius: 4px 12px 4px 12px;
    background-color: #5c5c5c;
}

/* Drawing area */
.canvas {
    flex: 1;
    position: relative;
    min-height: 379px;
    background-color: #212830;
}
.canvas-top {
    display: flex;
    justify-content: space-between;
    padding: 6px 10px 0 3px;
}
.view-buttons {
    display: flex;
    gap: 8px;
    padding-top: 2px;
}
.drawing {
    position: absolute;
    left: 0;
    top: 0;
}
.navbar {
    position: absolute;
    right: 4px;
    top: 27px;
    border-radius: 4px;
    background-color: #575c5f;
}

/* Command line */
.command {
    display: flex;
    margin-top: 1px;
    border: 1px solid #747474;
}
.command-side {
    width: 22px;
    padding: 4px 0 2px;
    display: flex;
    flex-direction: column;
    align-items: center;
    justify-content: space-between;
    background: linear-gradient(#6e6e6e, #404040);
}
.grip {
    width: 18px;
    height: 5px;
    background:
        linear-gradient(transparent 2px, #6b6b6b 2px 3px, transparent 3px),
        repeating-linear-gradient(90deg, #aaa 0 2px, transparent 2px 3px);
}
.command-main {
    flex: 1;
}
.history {
    height: 29px;
    padding: 12px 2px 0;
    background-color: #c8c8c8;
    border-bottom: 1px solid #8a8a8a;
    color: #000;
    font: 12px/15px "DejaVu Sans Mono", monospace;
}
.prompt {
    height: 23px;
    display: flex;
    align-items: center;
    gap: 6px;
    padding-left: 5px;
    background-color: #fff;
}
.prompt input {
    flex: 1;
    padding: 1px 0 0;
    border: 0;
    font: italic 12px/15px "DejaVu Sans Mono", monospace;
}
.prompt input::placeholder {
    color: #929292;
}

/* Status bar */
.status {
    height: 28px;
    padding: 1px 1px 0 0;
    display: flex;
    justify-content: flex-end;
    gap: 1px;
    background-color: #383838;
}
.cell, .model {
    width: 25px;
    display: flex;
    align-items: center;
    justify-content: center;
    border: 1px solid #7a7a7a;
    background-color: #4d4d4d;
}
.model {
    width: 57px;
    margin-right: 1px;
    font-size: 12px;
}
.cell.modes {
    width: 103px;
    justify-content: space-around;
}
.cell.snaps {
    width: 64px;
    margin: 0 2px 0 -2px;
    justify-content: space-around;
}
.cell.gear, .cell.lock {
    width: 41px;
    justify-content: space-around;
}
.drop::after {
    border-width: 4px 4px 0;
}
.glow svg {
    filter: drop-shadow(0 0 2px #0a63d8);
}
```
